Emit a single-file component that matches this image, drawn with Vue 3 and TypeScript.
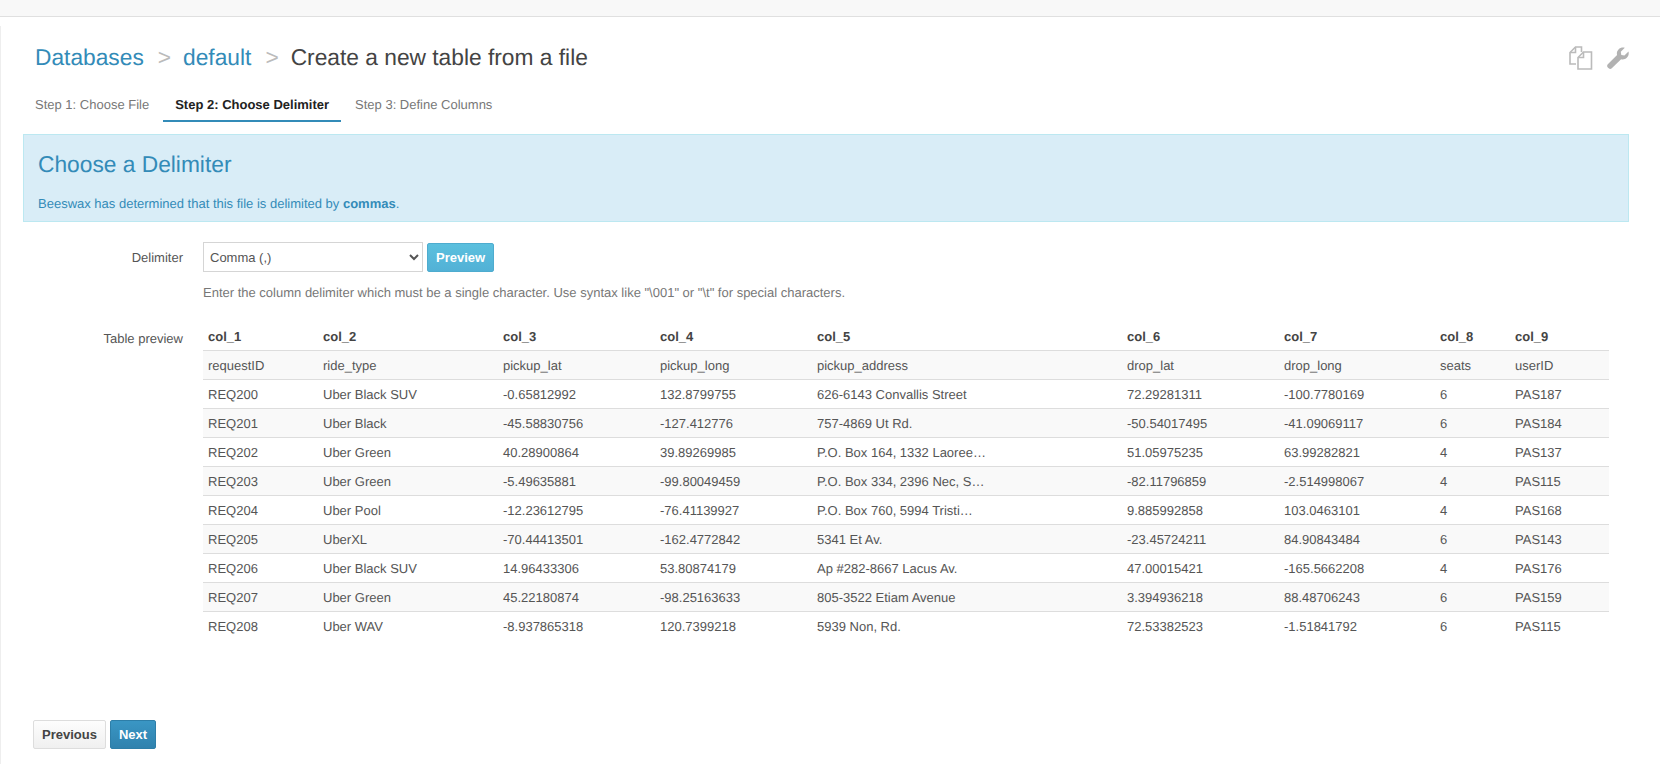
<script setup lang="ts">
const headers = ['col_1', 'col_2', 'col_3', 'col_4', 'col_5', 'col_6', 'col_7', 'col_8', 'col_9']

const rows: string[][] = [
  ['requestID', 'ride_type', 'pickup_lat', 'pickup_long', 'pickup_address', 'drop_lat', 'drop_long', 'seats', 'userID'],
  ['REQ200', 'Uber Black SUV', '-0.65812992', '132.8799755', '626-6143 Convallis Street', '72.29281311', '-100.7780169', '6', 'PAS187'],
  ['REQ201', 'Uber Black', '-45.58830756', '-127.412776', '757-4869 Ut Rd.', '-50.54017495', '-41.09069117', '6', 'PAS184'],
  ['REQ202', 'Uber Green', '40.28900864', '39.89269985', 'P.O. Box 164, 1332 Laoree…', '51.05975235', '63.99282821', '4', 'PAS137'],
  ['REQ203', 'Uber Green', '-5.49635881', '-99.80049459', 'P.O. Box 334, 2396 Nec, S…', '-82.11796859', '-2.514998067', '4', 'PAS115'],
  ['REQ204', 'Uber Pool', '-12.23612795', '-76.41139927', 'P.O. Box 760, 5994 Tristi…', '9.885992858', '103.0463101', '4', 'PAS168'],
  ['REQ205', 'UberXL', '-70.44413501', '-162.4772842', '5341 Et Av.', '-23.45724211', '84.90843484', '6', 'PAS143'],
  ['REQ206', 'Uber Black SUV', '14.96433306', '53.80874179', 'Ap #282-8667 Lacus Av.', '47.00015421', '-165.5662208', '4', 'PAS176'],
  ['REQ207', 'Uber Green', '45.22180874', '-98.25163633', '805-3522 Etiam Avenue', '3.394936218', '88.48706243', '6', 'PAS159'],
  ['REQ208', 'Uber WAV', '-8.937865318', '120.7399218', '5939 Non, Rd.', '72.53382523', '-1.51841792', '6', 'PAS115'],
]

const colWidths = [115, 180, 157, 157, 310, 157, 156, 75, 99]
</script>

<template>
  <div class="page">
    <div class="topbar"></div>
    <div class="content">
      <div class="title-row">
        <h1 class="crumbs">
          <a>Databases</a>
          <span class="sep">&gt;</span>
          <a>default</a>
          <span class="sep">&gt;</span>
          <span class="current">Create a new table from a file</span>
        </h1>
        <div class="tools">
          <svg width="24" height="24" viewBox="0 0 24 24" fill="none" stroke="#bbb" stroke-width="1.6">
            <path d="M7 18H1V6.500L6.500 1h6v5" />
            <path d="M6.500 1v5.500H1" />
            <path d="M9 23V11.500L14.500 6h8v17z" fill="#fff" />
            <path d="M14.500 6v5.500H9" />
          </svg>
          <svg class="wrench" width="22" height="22" viewBox="0 0 22 22">
            <path
              fill="#b2b2b2"
              d="M21.500 4.500c.6 2.300 0 4.700-1.700 6.300-1.500 1.500-3.700 2-5.700 1.400L4.800 21.300c-.9.900-2.300.9-3.100 0l-.9-.9c-.9-.8-.9-2.200 0-3.100l9.300-9.200c-.6-2-.1-4.200 1.400-5.700C13.100.8 15.500.2 17.800.800l-4 4 .5 3.100 3.100.5z"
            />
          </svg>
        </div>
      </div>

      <ul class="steps">
        <li>Step 1: Choose File</li>
        <li class="active">Step 2: Choose Delimiter</li>
        <li>Step 3: Define Columns</li>
      </ul>

      <div class="notice">
        <h2>Choose a Delimiter</h2>
        <p>Beeswax has determined that this file is delimited by <strong>commas</strong>.</p>
      </div>

      <div class="form-row delimiter-row">
        <label>Delimiter</label>
        <div class="controls">
          <div class="inline">
            <select class="select">
              <option>Comma (,)</option>
            </select>
            <button class="btn btn-info">Preview</button>
          </div>
          <p class="help">Enter the column delimiter which must be a single character. Use syntax like "\001" or "\t" for special characters.</p>
        </div>
      </div>

      <div class="form-row table-row">
        <label>Table preview</label>
        <table class="preview">
          <colgroup>
            <col v-for="(w, i) in colWidths" :key="i" :style="{ width: w + 'px' }" />
          </colgroup>
          <thead>
            <tr>
              <th v-for="h in headers" :key="h">{{ h }}</th>
            </tr>
          </thead>
          <tbody>
            <tr v-for="(row, i) in rows" :key="i">
              <td v-for="(cell, j) in row" :key="j">{{ cell }}</td>
            </tr>
          </tbody>
        </table>
      </div>

      <div class="actions">
        <button class="btn btn-default">Previous</button>
        <button class="btn btn-primary">Next</button>
      </div>
    </div>
  </div>
</template>

<style>
html,
body {
  margin: 0;
  background: #fff;
}
</style>

<style scoped>
.page {
  height: 764px;
  overflow: hidden;
  font-family: "Liberation Sans", Arial, sans-serif;
  font-size: 13px;
  line-height: 20px;
  color: #555;
  text-rendering: geometricPrecision;
}

.topbar {
  height: 16px;
  background: #f8f8f8;
  border-bottom: 1px solid #e0e0e0;
}

.content {
  margin-top: 9px;
  height: 738px;
  padding-left: 22px;
  padding-right: 31px;
  border-left: 1px solid #eee;
  box-sizing: border-box;
}

.title-row {
  display: flex;
  justify-content: space-between;
  padding: 18px 0 0 12px;
  height: 53px;
  box-sizing: border-box;
}

.crumbs {
  margin: 0;
  font-size: 22.75px;
  font-weight: 400;
  line-height: 26px;
  color: #444;
}

.crumbs a {
  color: #338bb8;
}

.sep {
  color: #bbb;
  margin: 0 12px 0 14px;
}

.tools {
  display: flex;
  gap: 14px;
  align-items: flex-start;
  margin-top: 2px;
}

.wrench {
  margin-top: 1px;
}

.steps {
  list-style: none;
  margin: 9px 0 0;
  padding: 0;
  display: flex;
  gap: 2px;
  height: 34px;
}

.steps li {
  padding: 7px 12px;
  color: #777;
  height: 34px;
  box-sizing: border-box;
}

.steps li.active {
  color: #222;
  font-weight: 700;
  border-bottom: 2px solid #338bb8;
}

.notice {
  margin-top: 12px;
  height: 88px;
  box-sizing: border-box;
  padding: 14px 14px;
  background: #d9edf7;
  border: 1px solid #bce8f1;
  color: #338bb8;
}

.notice h2 {
  margin: 0;
  font-size: 22.75px;
  font-weight: 400;
  line-height: 30px;
}

.notice p {
  margin: 15px 0 0;
}

.form-row {
  display: flex;
}

.form-row label {
  width: 160px;
  text-align: right;
  flex: none;
  margin-right: 20px;
}

.delimiter-row {
  margin-top: 20px;
}

.delimiter-row label {
  padding-top: 6px;
}

.inline {
  display: flex;
  align-items: flex-start;
  gap: 4px;
}

.select {
  width: 220px;
  height: 30px;
  padding: 4px 5px 4px 2px;
  font: inherit;
  color: #555;
  background: #fff;
  border: 1px solid #d5d5d5;
}

.btn {
  height: 29px;
  padding: 0 8px;
  font: inherit;
  font-weight: 700;
  border-radius: 2px;
  cursor: pointer;
}

.btn-info {
  margin-top: 1px;
  color: #fff;
  background: linear-gradient(#5bc0de, #52b1d6);
  border: 1px solid #4eaccf;
}

.help {
  margin: 11px 0 0;
  color: #777;
}

.table-row {
  margin-top: 19px;
}

.table-row label {
  padding-top: 7px;
}

.preview {
  width: 1406px;
  table-layout: fixed;
  border-collapse: collapse;
}

.preview th,
.preview td {
  padding: 0 5px;
  text-align: left;
  white-space: nowrap;
  overflow: hidden;
  box-sizing: border-box;
}

.preview th {
  height: 28px;
  padding-top: 3px;
  color: #444;
}

.preview td {
  height: 29px;
  padding-top: 3px;
  border-top: 1px solid #ddd;
}

.preview tbody tr:nth-child(odd) td {
  background: #f9f9f9;
}

.actions {
  margin-top: 80px;
  margin-left: 10px;
  display: flex;
  gap: 4px;
}

.btn-default {
  color: #444;
  background: linear-gradient(#fdfdfd, #f0f0f0);
  border: 1px solid #ddd;
}

.btn-primary {
  color: #fff;
  background: linear-gradient(#3a96c4, #2f82ae);
  border: 1px solid #2d7ea8;
}
</style>
